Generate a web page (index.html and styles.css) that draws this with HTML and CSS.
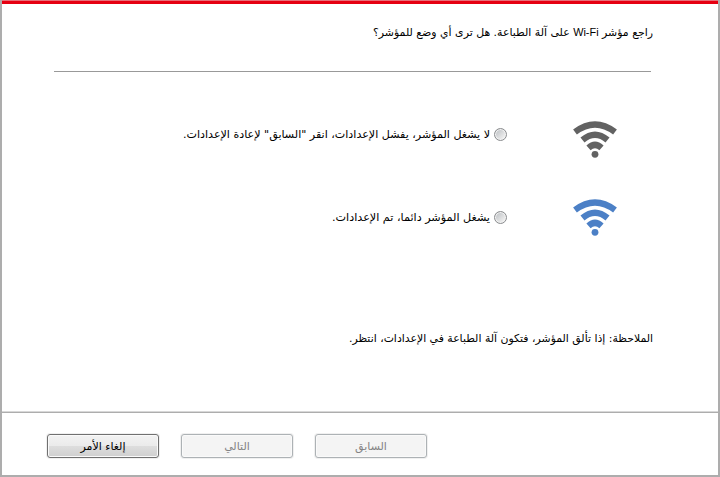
FILE: index.html
```html
<!DOCTYPE html>
<html lang="ar" dir="rtl">
<head>
<meta charset="utf-8">
<title>Wi-Fi</title>
<link rel="stylesheet" href="styles.css">
</head>
<body>
<div class="window">
  <div class="accent"></div>
  <main class="content">
    <h1 class="heading"><svg class="line" width="280" height="20"><text x="280" y="14" textLength="280" lengthAdjust="spacingAndGlyphs">راجع مؤشر <tspan class="latin">Wi-Fi</tspan> على آلة الطباعة. هل ترى أي وضع للمؤشر؟</text></svg></h1>
    <div class="options">
      <label class="option">
        <svg class="wifi dark" viewBox="0 0 48 40"><path d="M4 14Q24-1 44 14M11.500 22Q24 11.500 36.500 22M17.500 29.800Q24 24 30.500 29.800"/><circle cx="24" cy="36.300" r="3.400"/></svg>
        <span class="radio"></span>
        <svg class="line" width="307" height="20"><text x="307" y="14" textLength="307" lengthAdjust="spacingAndGlyphs">لا يشغل المؤشر، يفشل الإعدادات، انقر "السابق" لإعادة الإعدادات.</text></svg>
      </label>
      <label class="option">
        <svg class="wifi blue" viewBox="0 0 48 40"><path d="M4 14Q24-1 44 14M11.500 22Q24 11.500 36.500 22M17.500 29.800Q24 24 30.500 29.800"/><circle cx="24" cy="36.300" r="3.400"/></svg>
        <span class="radio"></span>
        <svg class="line" width="158" height="20"><text x="158" y="14" textLength="158" lengthAdjust="spacingAndGlyphs">يشغل المؤشر دائما، تم الإعدادات.</text></svg>
      </label>
    </div>
    <p class="note"><svg class="line" width="304" height="20"><text x="304" y="14" textLength="304" lengthAdjust="spacingAndGlyphs">الملاحظة: إذا تألق المؤشر، فتكون آلة الطباعة في الإعدادات، انتظر.</text></svg></p>
  </main>
  <footer class="actions">
    <button disabled>السابق</button>
    <button disabled>التالي</button>
    <button>إلغاء الأمر</button>
  </footer>
</div>
</body>
</html>
```
FILE: styles.css
```css
* { box-sizing: border-box; }
body { margin: 0; font: 11px "DejaVu Sans", sans-serif; color: #000; }
.window { width: 720px; height: 477px; display: flex; flex-direction: column; border: 2px solid #adadad; border-top: 0; background: #fff; }
.accent { flex: none; height: 4px; border-top: 1px solid #e8707a; background: #e60012; }
.content { flex: none; height: 408px; padding: 18px 65px 0 52px; }
.heading { margin: 0; height: 50px; font: inherit; background: linear-gradient(#999, #999) 0 100% / calc(100% - 2px) 1px no-repeat; }
.line { display: block; overflow: visible; }
.line text { direction: rtl; text-anchor: start; }
.latin { font-family: "Liberation Sans", sans-serif; font-size: 11px; }
.options { padding: 41px 34px 0 0; }
.option { display: flex; align-items: center; height: 42px; margin-bottom: 41px; }
.options .option:last-child { margin-bottom: 47px; }
.wifi { width: 48px; height: 40px; margin-left: 65px; fill: none; stroke-width: 6.300; }
.dark { margin-top: 8px; stroke: #626262; }
.dark circle { fill: #626262; stroke: none; }
.blue { margin-top: -3px; stroke: #4c80c6; }
.blue circle { fill: #4c80c6; stroke: none; }
.radio { width: 13px; height: 13px; margin-left: 3px; margin-right: -1px; border: 1px solid #8a8c8e; border-radius: 50%; background: linear-gradient(135deg, #b8bcc0, #eee 80%); box-shadow: inset 0 0 0 1px #f2f2f2; }
.radio + .line { margin-right: 1px; }
.note { margin: 0; padding-top: 43px; }
.actions { flex: none; height: 63px; border-top: 1px solid #adadad; box-shadow: 0 -1px #d8d8d8; padding: 21px 291px 0 45px; display: flex; gap: 22px; }
button { width: 112px; height: 24px; padding: 0; border: 1px solid #707070; border-radius: 3px; background: linear-gradient(#f2f2f2, #ebebeb 48%, #ddd 52%, #cfcfcf); box-shadow: 0 0 0 1px #f0f0f0, inset 0 0 0 1px #fafafa; font: inherit; color: #000; }
button:disabled { border-color: #adb2b5; background: #f4f4f4; color: #838383; }
```
